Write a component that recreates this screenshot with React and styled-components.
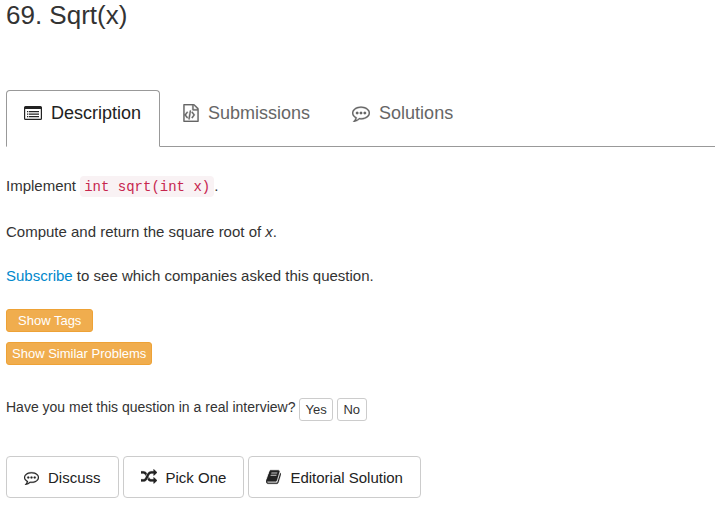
import React from "react";
import styled, { createGlobalStyle, css } from "styled-components";

const GlobalStyle = createGlobalStyle`
  *, *::before, *::after { box-sizing: border-box; }
  body {
    margin: 0;
    background: #fff;
    color: #333;
    font-family: "Liberation Sans", Arial, sans-serif;
    font-size: 15px;
    line-height: 22px;
  }
`;

const Page = styled.main`
  padding: 0 0 16px 6px;
`;

const Title = styled.h1`
  margin: 0 0 60px;
  font-size: 26px;
  font-weight: 400;
  line-height: 30px;
`;

const TabList = styled.nav`
  display: flex;
  gap: 5px;
  border-bottom: 1px solid #999;
`;

const Tab = styled.a`
  display: flex;
  align-items: center;
  gap: 9px;
  height: 57px;
  margin-bottom: -1px;
  padding: 0 18px 11px 17px;
  border: 1px solid transparent;
  border-radius: 4px 4px 0 0;
  color: #666;
  font-size: 18px;
  line-height: 26px;
  text-decoration: none;
  ${({ $active }) =>
    $active &&
    css`
      border-color: #999;
      border-bottom-color: #fff;
      background: #fff;
      color: #222;
    `}
`;

const Glyph = styled.svg`
  flex: none;
  width: ${({ $width }) => $width}px;
  height: ${({ $size }) => $size}px;
  fill: currentColor;
  stroke: currentColor;
  stroke-width: ${({ $weight = 28 }) => $weight};
`;

const Statement = styled.section`
  padding-top: 28px;
`;

const Paragraph = styled.p`
  margin: 0 0 22px;

  &:first-child {
    margin-bottom: 23px;
  }
`;

const Code = styled.code`
  padding: 3px 4px 2px;
  border-radius: 4px;
  background: #f9f2f4;
  color: #c7254e;
  font-family: "Liberation Mono", monospace;
  font-size: 14px;
`;

const Link = styled.a`
  color: #0088cc;
  text-decoration: none;
`;

const TagActions = styled.div`
  display: flex;
  flex-direction: column;
  align-items: flex-start;
  gap: 10px;
`;

const SmallButton = styled.button`
  min-width: 30px;
  height: 23px;
  padding: 0 ${({ $wide }) => ($wide ? 11 : 5)}px;
  border: 1px solid ${({ $warning }) => ($warning ? "#eea236" : "#ccc")};
  border-radius: 3px;
  background: ${({ $warning }) => ($warning ? "#f0ad4e" : "#fff")};
  color: ${({ $warning }) => ($warning ? "#fff" : "#333")};
  font-family: inherit;
  font-size: 13px;
  line-height: 20px;
  cursor: pointer;
`;

const Survey = styled.div`
  display: flex;
  align-items: center;
  gap: 4px;
  margin: 33px 0 35px;
  font-size: 14px;
  line-height: 19px;
`;

const SurveyQuestion = styled.span`
  padding-bottom: 4px;
`;

const ActionBar = styled.div`
  display: flex;
  flex-wrap: wrap;
  gap: 4px;
`;

const ActionButton = styled.button`
  display: flex;
  align-items: center;
  gap: 9px;
  height: 42px;
  padding: 0 17px;
  border: 1px solid #ccc;
  border-radius: 4px;
  background: #fff;
  color: #222;
  font-family: inherit;
  font-size: 15px;
  cursor: pointer;
`;

const ListIcon = () => (
  <Glyph $width={18} $size={18} $weight={0} viewBox="0 0 18 18" aria-hidden="true">
    <path
      fillRule="evenodd"
      d="M1.5 2h15q1.5 0 1.5 1.5v11q0 1.5-1.5 1.5h-15q-1.5 0-1.5-1.5v-11q0-1.5 1.5-1.5zM1.2 5v9.8h15.6v-9.8z"
    />
    <path d="M3 7h1.3v1.2h-1.3zM3 9.5h1.3v1.2h-1.3zM3 12h1.3v1.2h-1.3zM5 7h10v1.2h-10zM5 9.5h10v1.2h-10zM5 12h10v1.2h-10z" />
  </Glyph>
);

const FileCodeIcon = () => (
  <Glyph $width={16} $size={18} viewBox="128 0 1536 1792" aria-hidden="true">
    <path d="M1596 380q28 28 48 76t20 88v1152q0 40-28 68t-68 28h-1344q-40 0-68-28t-28-68v-1600q0-40 28-68t68-28h896q40 0 88 20t76 48zm-444-244v376h376q-10-29-22-41l-313-313q-12-12-41-22zm384 1528v-1024h-416q-40 0-68-28t-28-68v-416h-768v1536h1280zm-1056-896q8-11 21-12.5t24 6.5l51 38q11 8 12.5 21t-6.5 24l-182 243 182 243q8 11 6.5 24t-12.5 21l-51 38q-11 8-24 6.5t-21-12.5l-226-301q-14-19 0-38zm802 301q14 19 0 38l-226 301q-8 11-21 12.5t-24-6.5l-51-38q-11-8-12.5-21t6.5-24l182-243-182-243q-8-11-6.5-24t12.5-21l51-38q11-8 24-6.5t21 12.5zm-620 461q-13-2-20.5-13t-5.5-24l138-831q2-13 13-20.5t24-5.5l63 10q13 2 20.5 13t5.5 24l-138 831q-2 13-13 20.5t-24 5.5z" />
  </Glyph>
);

const CommentIcon = ({ size }) => (
  <Glyph $width={size} $size={size} viewBox="0 0 1792 1792" aria-hidden="true">
    <circle cx="512" cy="896" r="128" />
    <circle cx="896" cy="896" r="128" />
    <circle cx="1280" cy="896" r="128" />
    <path d="M896 384q-204 0-381.5 69.5t-282 187.5-104.5 255q0 112 71.5 213.5t201.5 175.5l87 50-27 96q-24 91-70 172 152-63 275-171l43-38 57 6q69 8 130 8 204 0 381.5-69.5t282-187.5 104.5-255-104.5-255-282-187.5-381.5-69.5zm896 512q0 174-120 321.5t-326 233-450 85.5q-70 0-145-8-198 175-460 242-49 14-114 22h-5q-15 0-27-10.5t-16-27.5v-1q-3-4-.5-12t2-10 4.5-9.5l6-9 7-8.5 8-9q7-8 31-34.5t34.5-38 31-39.5 32.5-51 27-59 26-76q-157-89-247.5-220t-90.5-281q0-130 71-248.5t191-204.5 286-136.5 348-50.5 348 50.5 286 136.5 191 204.5 71 248.5z" />
  </Glyph>
);

const RandomIcon = () => (
  <Glyph $width={16} $size={16} viewBox="0 0 1792 1792" aria-hidden="true">
    <path d="M666 481q-60 92-137 273-22-45-37-72.5t-40.5-63.5-51-56.5-63-35-81.5-14.5h-224q-14 0-23-9t-9-23v-192q0-14 9-23t23-9h224q250 0 410 225zm1126 799q0 14-9 23l-320 320q-9 9-23 9-13 0-22.5-9.5t-9.5-22.5v-192q-32 0-85 .5t-81 1-73-1-71-5-64-10.5-63-18.5-58-28.5-59-40-55-53.5-56-69.5q59-93 136-273 22 45 37 72.5t40.5 63.5 51 56.5 63 35 81.5 14.5h256v-192q0-14 9-23t23-9q12 0 24 10l319 319q9 9 9 23zm0-896q0 14-9 23l-320 320q-9 9-23 9-13 0-22.5-9.5t-9.5-22.5v-192h-256q-48 0-87 15t-69 45-51 61.5-45 77.5q-32 62-78 171-29 66-49.5 111t-54 105-64 100-74 83-90 68.5-106.5 42-128 16.5h-224q-14 0-23-9t-9-23v-192q0-14 9-23t23-9h224q48 0 87-15t69-45 51-61.5 45-77.5q32-62 78-171 29-66 49.5-111t54-105 64-100 74-83 90-68.5 106.5-42 128-16.5h256v-192q0-14 9-23t23-9q12 0 24 10l319 319q9 9 9 23z" />
  </Glyph>
);

const BookIcon = () => (
  <Glyph $width={15} $size={16} viewBox="64 0 1664 1792" aria-hidden="true">
    <path d="M1703 478q40 57 18 129l-275 906q-19 64-76.5 107.5t-122.5 43.5h-923q-77 0-148.5-53.5t-99.5-131.5q-24-67-2-127 0-4 3-27t4-37q1-8-3-21.5t-3-19.5q2-11 8-21t16.5-23.5 16.5-23.5q23-38 45-91.5t30-91.5q3-10 .5-30t-.5-28q3-11 17-28t17-23q21-36 42-92t25-90q1-9-2.5-32t.5-28q4-13 22-30.5t22-22.5q19-26 42.5-84.5t27.5-96.5q1-8-3-25.5t-2-26.5q2-8 9-18t18-23 17-21q8-12 16.5-30.5t15-35 16-36 19.5-32 26.5-23.5 36-11.5 47.5 5.5l-1 3q38-9 51-9h761q74 0 114 56t18 130l-274 906q-36 119-71.5 153.5t-128.5 34.5h-869q-27 0-38 15-11 16-1 43 24 70 144 70h923q29 0 56-15.5t35-41.5l300-987q7-22 5-57 38 15 59 43zm-1064 2q-4 13 2 22.5t20 9.5h608q13 0 25.5-9.5t16.5-22.5l21-64q4-13-2-22.5t-20-9.5h-608q-13 0-25.5 9.5t-16.5 22.5zm-83 256q-4 13 2 22.5t20 9.5h608q13 0 25.5-9.5t16.5-22.5l21-64q4-13-2-22.5t-20-9.5h-608q-13 0-25.5 9.5t-16.5 22.5z" />
  </Glyph>
);

export default function App() {
  return (
    <>
      <GlobalStyle />
      <Page>
        <Title>69. Sqrt(x)</Title>
        <TabList aria-label="Problem sections">
          <Tab href="#description" $active aria-current="page">
            <ListIcon />
            Description
          </Tab>
          <Tab href="#submissions">
            <FileCodeIcon />
            Submissions
          </Tab>
          <Tab href="#solutions">
            <CommentIcon size={18} />
            Solutions
          </Tab>
        </TabList>
        <Statement>
          <Paragraph>
            Implement <Code>int sqrt(int x)</Code>.
          </Paragraph>
          <Paragraph>
            Compute and return the square root of <em>x</em>.
          </Paragraph>
          <Paragraph>
            <Link href="#subscribe">Subscribe</Link> to see which companies asked this question.
          </Paragraph>
        </Statement>
        <TagActions>
          <SmallButton type="button" $warning $wide>Show Tags</SmallButton>
          <SmallButton type="button" $warning>Show Similar Problems</SmallButton>
        </TagActions>
        <Survey role="group" aria-labelledby="survey-question">
          <SurveyQuestion id="survey-question">
            Have you met this question in a real interview?
          </SurveyQuestion>
          <SmallButton type="button">Yes</SmallButton>
          <SmallButton type="button">No</SmallButton>
        </Survey>
        <ActionBar>
          <ActionButton type="button">
            <CommentIcon size={15} />
            Discuss
          </ActionButton>
          <ActionButton type="button">
            <RandomIcon />
            Pick One
          </ActionButton>
          <ActionButton type="button">
            <BookIcon />
            Editorial Solution
          </ActionButton>
        </ActionBar>
      </Page>
    </>
  );
}
